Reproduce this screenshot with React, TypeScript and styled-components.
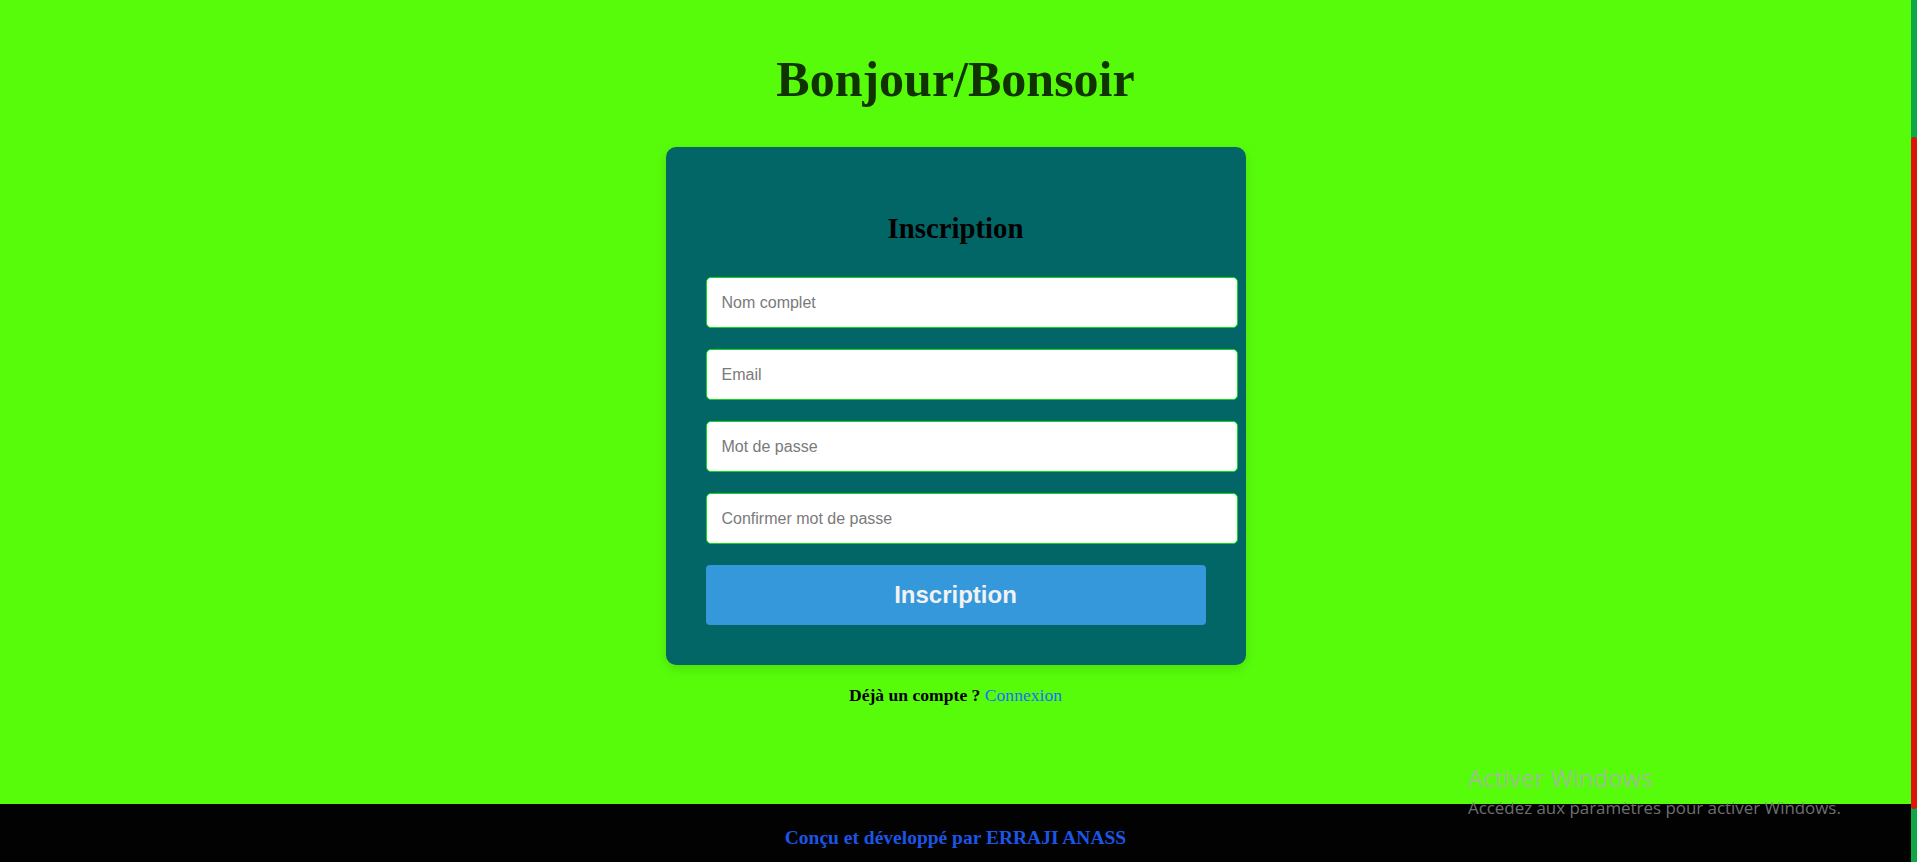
import React from "react";
import styled, { createGlobalStyle } from "styled-components";

const GlobalStyle = createGlobalStyle`
  html, body {
    margin: 0;
    padding: 0;
    height: 100%;
    overflow: hidden;
  }
  body {
    font-family: "Liberation Serif", "Times New Roman", serif;
    background: #57fc0b;
  }
`;

const Shell = styled.div`
  position: relative;
  display: grid;
  grid-template-columns: 1fr 6px;
  height: 862px;
  overflow: hidden;
`;

const Page = styled.div`
  display: flex;
  flex-direction: column;
  min-width: 0;
  background: #57fc0b;
`;

const Main = styled.main`
  flex: 1;
  display: flex;
  flex-direction: column;
  align-items: center;
`;

const Title = styled.h1`
  margin: 51px 0 40px;
  font-family: "Liberation Serif", "Times New Roman", serif;
  font-size: 50px;
  line-height: 56px;
  font-weight: 700;
  color: #113300;
`;

const Card = styled.section`
  box-sizing: border-box;
  width: 580px;
  padding: 40px;
  background: #036666;
  border-radius: 10px;
  box-shadow: 0 4px 12px rgba(0, 0, 0, 0.12);
`;

const CardTitle = styled.h2`
  margin: 25px 0 32px;
  text-align: center;
  font-family: "Liberation Serif", "Times New Roman", serif;
  font-size: 28.8px;
  line-height: 33px;
  font-weight: 700;
  color: #000;
`;

const Form = styled.form`
  display: flex;
  flex-direction: column;
  align-items: flex-start;
`;

const Field = styled.input`
  display: block;
  box-sizing: content-box;
  width: 100%;
  height: 19px;
  padding: 15px;
  margin: 0 0 21px;
  border: 1px solid #12d81e;
  border-radius: 5px;
  background: #fff;
  font-family: "Liberation Sans", Arial, sans-serif;
  font-size: 16px;
  color: #222;
  outline: none;
  &::placeholder {
    color: #7a7a7a;
  }
`;

const SubmitButton = styled.button`
  box-sizing: border-box;
  width: 100%;
  height: 60px;
  border: none;
  border-radius: 4px;
  background: #3498db;
  color: #f2f2f2;
  font-family: "Liberation Sans", Arial, sans-serif;
  font-size: 24px;
  font-weight: 700;
  cursor: pointer;
`;

const SwitchLine = styled.p`
  margin: 20px 0 0;
  font-family: "Liberation Serif", "Times New Roman", serif;
  font-size: 17.6px;
  line-height: 20px;
  font-weight: 700;
  color: #000;
`;

const SwitchLink = styled.a`
  font-weight: 400;
  color: #1a6dff;
  text-decoration: none;
`;

const Footer = styled.footer`
  box-sizing: border-box;
  height: 58px;
  padding-top: 23px;
  background: #020202;
  text-align: center;
`;

const FooterText = styled.p`
  margin: 0;
  font-family: "Liberation Serif", "Times New Roman", serif;
  font-size: 19.5px;
  line-height: 22px;
  font-weight: 700;
  color: #1c55e6;
`;

const ScrollTrack = styled.div`
  display: flex;
  flex-direction: column;
  background: #10a846;
`;

const ScrollThumb = styled.div`
  margin-top: 137px;
  height: 672px;
  background: #dc140a;
  border-radius: 3px;
`;

const Watermark = styled.div`
  position: absolute;
  left: 1468px;
  top: 761px;
  font-family: "Open Sans", "Noto Sans", sans-serif;
  pointer-events: none;
`;

const WatermarkTitle = styled.div`
  font-size: 24px;
  line-height: 34px;
  color: rgba(175, 175, 175, 0.8);
`;

const WatermarkText = styled.div`
  margin-top: 3px;
  font-size: 16.9px;
  line-height: 20px;
  color: rgba(140, 140, 140, 0.8);
`;

export default function App() {
  return (
    <>
      <GlobalStyle />
      <Shell>
        <Page>
          <Main>
            <Title>Bonjour/Bonsoir</Title>
            <Card>
              <CardTitle>Inscription</CardTitle>
              <Form onSubmit={(e) => e.preventDefault()}>
                <Field type="text" placeholder="Nom complet" />
                <Field type="email" placeholder="Email" />
                <Field type="password" placeholder="Mot de passe" />
                <Field type="password" placeholder="Confirmer mot de passe" />
                <SubmitButton type="submit">Inscription</SubmitButton>
              </Form>
            </Card>
            <SwitchLine>
              Déjà un compte ? <SwitchLink href="#">Connexion</SwitchLink>
            </SwitchLine>
          </Main>
          <Footer>
            <FooterText>Conçu et développé par ERRAJI ANASS</FooterText>
          </Footer>
        </Page>
        <ScrollTrack>
          <ScrollThumb />
        </ScrollTrack>
        <Watermark>
          <WatermarkTitle>Activer Windows</WatermarkTitle>
          <WatermarkText>Accédez aux paramètres pour activer Windows.</WatermarkText>
        </Watermark>
      </Shell>
    </>
  );
}
